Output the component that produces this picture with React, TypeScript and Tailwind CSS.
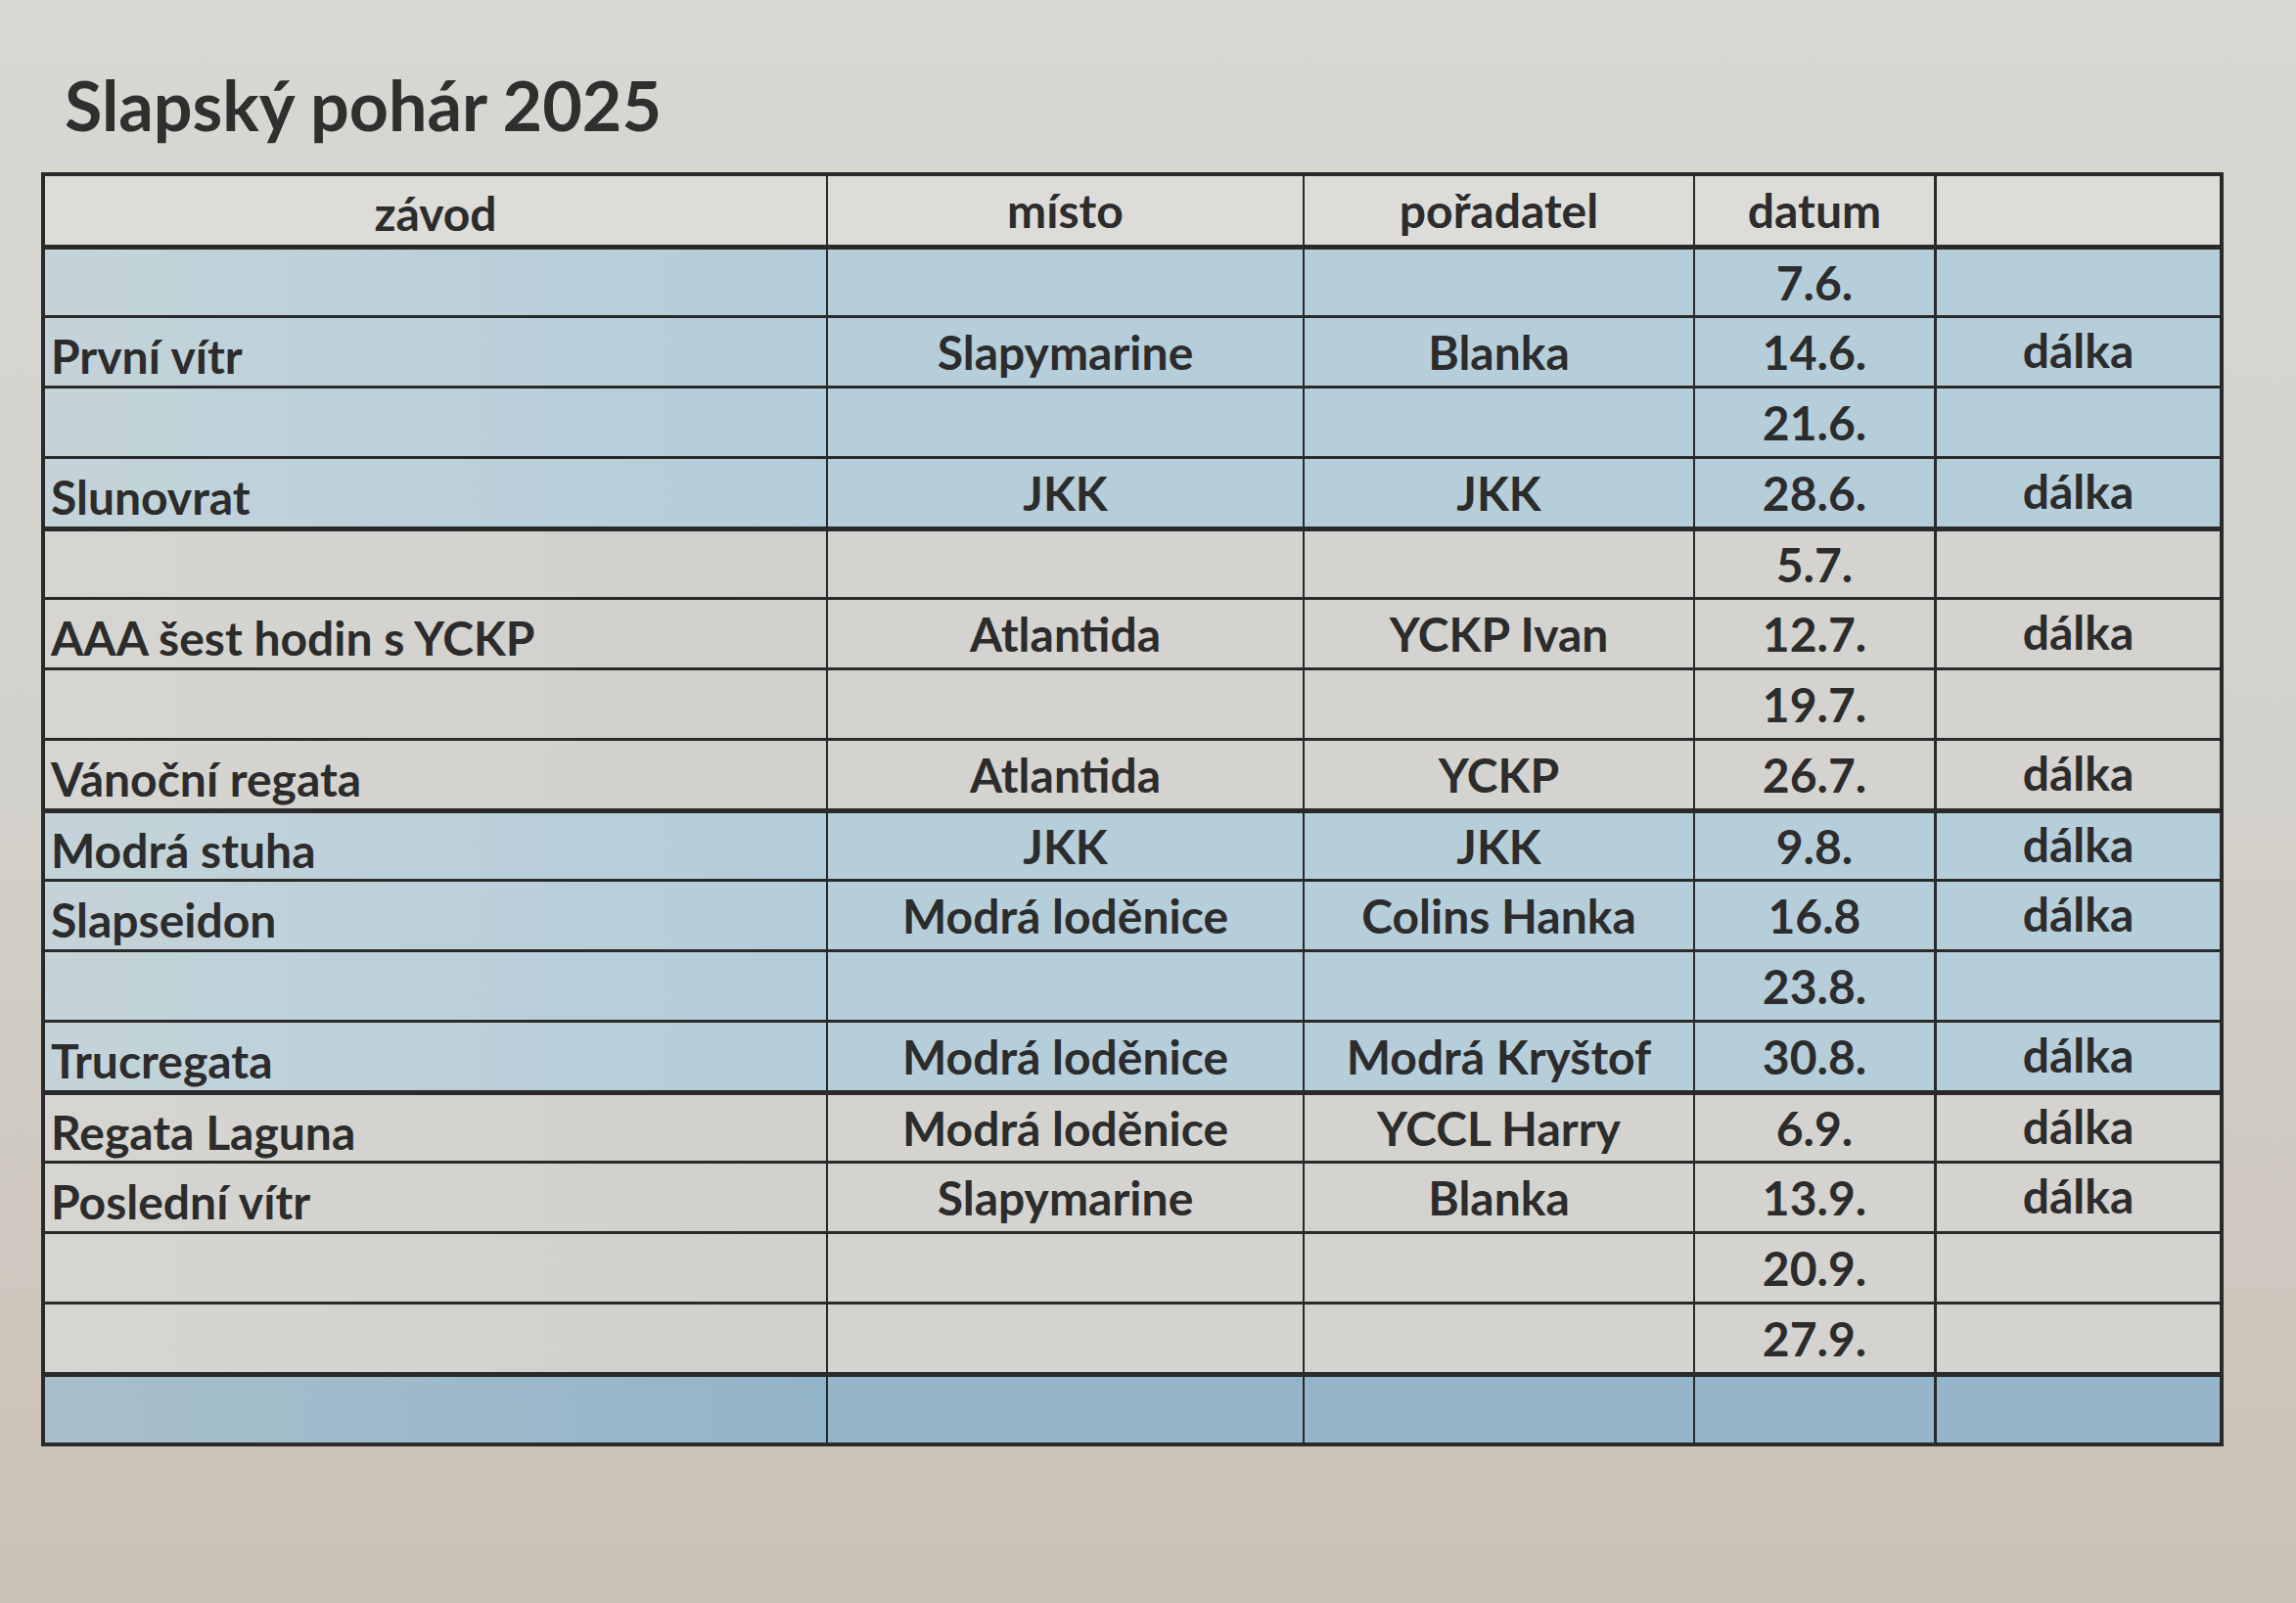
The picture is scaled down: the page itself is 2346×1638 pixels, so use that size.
import React from "react";

type Row = {
  z?: string;
  m?: string;
  p?: string;
  d?: string;
  x?: string;
  tone: "blue" | "gray" | "deep";
  thick?: boolean;
};

const rows: Row[] = [
  { d: "7.6.", tone: "blue", thick: true },
  { z: "První vítr", m: "Slapymarine", p: "Blanka", d: "14.6.", x: "dálka", tone: "blue" },
  { d: "21.6.", tone: "blue" },
  { z: "Slunovrat", m: "JKK", p: "JKK", d: "28.6.", x: "dálka", tone: "blue" },
  { d: "5.7.", tone: "gray", thick: true },
  { z: "AAA šest hodin s YCKP", m: "Atlantida", p: "YCKP Ivan", d: "12.7.", x: "dálka", tone: "gray" },
  { d: "19.7.", tone: "gray" },
  { z: "Vánoční regata", m: "Atlantida", p: "YCKP", d: "26.7.", x: "dálka", tone: "gray" },
  { z: "Modrá stuha", m: "JKK", p: "JKK", d: "9.8.", x: "dálka", tone: "blue", thick: true },
  { z: "Slapseidon", m: "Modrá loděnice", p: "Colins Hanka", d: "16.8", x: "dálka", tone: "blue" },
  { d: "23.8.", tone: "blue" },
  { z: "Trucregata", m: "Modrá loděnice", p: "Modrá Kryštof", d: "30.8.", x: "dálka", tone: "blue" },
  { z: "Regata Laguna", m: "Modrá loděnice", p: "YCCL Harry", d: "6.9.", x: "dálka", tone: "gray", thick: true },
  { z: "Poslední vítr", m: "Slapymarine", p: "Blanka", d: "13.9.", x: "dálka", tone: "gray" },
  { d: "20.9.", tone: "gray" },
  { d: "27.9.", tone: "gray" },
  { tone: "deep", thick: true },
];

function toneClasses(tone: Row["tone"]) {
  if (tone === "blue") return "bg-[#b6ceda]";
  if (tone === "deep") return "bg-[#95b6ca]";
  return "bg-[#d4d3cf]";
}

function firstCellTone(tone: Row["tone"]) {
  if (tone === "blue") return "bg-linear-to-r from-[#c4d3d9] to-[#b4cdda]";
  if (tone === "deep") return "bg-linear-to-r from-[#a8bfca] to-[#92b4c9]";
  return "bg-linear-to-r from-[#d6d5d1] to-[#d1d0cc]";
}

export default function App() {
  return (
    <div className="w-[2346px] h-[1638px] overflow-hidden bg-linear-to-b from-[#d8d7d2] via-[#d3d1cb] to-[#cbc1b4] font-['Lato','Liberation_Sans',sans-serif] text-[#2c2c2c]">
      <div className="pl-[66px] pt-[72px] text-[70px] font-bold leading-none text-[#2f2f2f]">
        Slapský pohár 2025
      </div>
      <div className="ml-[42px] mt-[34px] w-[2230px] border-[4px] border-[#2a2a2a]">
        <div className="flex h-[70px] bg-[#dddcd8] text-[48px] font-bold leading-none">
          <div className="flex w-[800px] items-center justify-center border-r-2 border-[#2a2a2a] pt-[6px]">závod</div>
          <div className="flex w-[487px] items-center justify-center border-r-2 border-[#2a2a2a]">místo</div>
          <div className="flex w-[399px] items-center justify-center border-r-2 border-[#2a2a2a]">pořadatel</div>
          <div className="flex w-[247px] items-center justify-center border-r-[3px] border-[#2a2a2a]">datum</div>
          <div className="flex flex-1 items-center justify-center"></div>
        </div>
        {rows.map((r, i) => (
          <div
            key={i}
            className={`flex h-[72px] text-[48px] font-bold leading-none border-t-[#2a2a2a] ${
              r.thick ? "border-t-[5px]" : "border-t-[3px]"
            } ${toneClasses(r.tone)}`}
          >
            <div
              className={`flex w-[800px] items-center justify-start border-r-2 border-[#2a2a2a] pl-[6px] pt-[8px] ${firstCellTone(
                r.tone
              )}`}
            >
              {r.z}
            </div>
            <div className="flex w-[487px] items-center justify-center border-r-2 border-[#2a2a2a]">{r.m}</div>
            <div className="flex w-[399px] items-center justify-center border-r-2 border-[#2a2a2a]">{r.p}</div>
            <div className="flex w-[247px] items-center justify-center border-r-[3px] border-[#2a2a2a]">{r.d}</div>
            <div className="flex flex-1 items-center justify-center pb-[4px]">{r.x}</div>
          </div>
        ))}
      </div>
    </div>
  );
}
